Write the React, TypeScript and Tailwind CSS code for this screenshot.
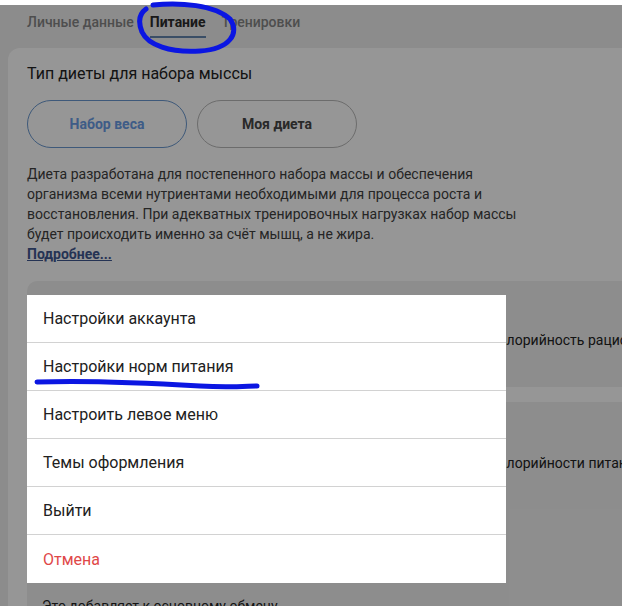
import React from "react";

const menuItems = [
  { label: "Настройки аккаунта" },
  { label: "Настройки норм питания" },
  { label: "Настроить левое меню" },
  { label: "Темы оформления" },
  { label: "Выйти" },
  { label: "Отмена", danger: true },
];

export default function App() {
  return (
    <div className="relative h-[606px] w-[622px] overflow-hidden bg-[#efefef] font-['Roboto','Noto_Sans',sans-serif] text-[#222]">
      <div className="h-[5px] bg-white" />

      {/* Tabs */}
      <nav className="flex h-[43px] gap-4 px-[27px] text-[14px] leading-[18px]">
        <div className="flex flex-col pt-[8px] font-medium text-[#858585]">
          <span>Личные данные</span>
        </div>
        <div className="flex flex-col pt-[8px] font-bold text-[#2b2b2b]">
          <span>Питание</span>
          <span className="mt-[5px] h-[2px] bg-[#6485ad]" />
        </div>
        <div className="flex flex-col pt-[8px] font-medium text-[#858585]">
          <span>Тренировки</span>
        </div>
      </nav>

      {/* Main card */}
      <section className="ml-[8px] w-[640px] rounded-xl bg-white pl-[19px] pt-[14px] pb-10">
        <h2 className="text-[16px] leading-6 text-[#222]">Тип диеты для набора мыссы</h2>

        <div className="mt-[14px] flex gap-[10px]">
          <button className="flex h-[48px] w-[160px] items-center justify-center rounded-full border border-[#6a98cf] text-[14px] font-bold text-[#6a9ce6]">
            Набор веса
          </button>
          <button className="flex h-[48px] w-[160px] items-center justify-center rounded-full border border-[#b8b8b8] text-[14px] font-bold text-[#464646]">
            Моя диета
          </button>
        </div>

        <p className="mt-[16px] w-[505px] text-[14px] leading-5 text-[#404040]">
          Диета разработана для постепенного набора массы и обеспечения организма всеми нутриентами необходимыми для процесса роста и восстановления. При адекватных тренировочных нагрузках набор массы будет происходить именно за счёт мышц, а не жира.
        </p>
        <a className="block text-[14px] font-bold leading-5 text-[#3f5890] underline">Подробнее...</a>

        <div className="mt-[17px] flex flex-col gap-[15px]">
          <div className="h-[106px] rounded-[10px] bg-[#f0f0f0] px-[15px] pt-[49px]">
            <div className="grid grid-cols-[448px_1fr] text-[14px] leading-5 text-[#222]">
              <span />
              <span className="whitespace-nowrap">Калорийность рациона</span>
            </div>
          </div>
          <div className="h-[220px] rounded-[10px] bg-[#f0f0f0] px-[15px] pt-[51px]">
            <div className="grid grid-cols-[448px_1fr] text-[14px] leading-5 text-[#222]">
              <span />
              <span className="whitespace-nowrap">Калорийности питания</span>
            </div>
            <p className="mt-[123px] text-[14px] leading-5 text-[#222]">Это добавляет к основному обмену</p>
          </div>
        </div>
      </section>

      {/* Backdrop */}
      <div className="absolute inset-x-0 bottom-0 top-[5px] bg-black/[0.41]" />

      {/* Action sheet */}
      <div className="absolute left-[27px] top-[295px] w-[479px] bg-white">
        {menuItems.map((item, i) => (
          <div
            key={item.label}
            className={
              "flex h-[48px] items-center px-4 pt-[1px] text-[16px] " +
              (i < menuItems.length - 1 ? "border-b border-[#d2d2d2] " : "") +
              (item.danger ? "text-[#e04848]" : "text-[#212121]")
            }
          >
            {item.label}
          </div>
        ))}
      </div>

      {/* Hand-drawn annotations */}
      <svg className="pointer-events-none absolute inset-0" width="622" height="606" viewBox="0 0 622 606">
        <path
          d="M153 5 C180 2 215 5 230 19 C240 33 230 49 200 51 C170 53 148 45 142 32 C138 22 139 14 146 9"
          fill="none"
          stroke="#0b16e2"
          strokeWidth="5"
          strokeLinecap="round"
        />
        <path
          d="M37 382 C90 380 150 383 200 386 C230 388 248 386 257 386"
          fill="none"
          stroke="#0b16e2"
          strokeWidth="5"
          strokeLinecap="round"
        />
      </svg>
    </div>
  );
}
